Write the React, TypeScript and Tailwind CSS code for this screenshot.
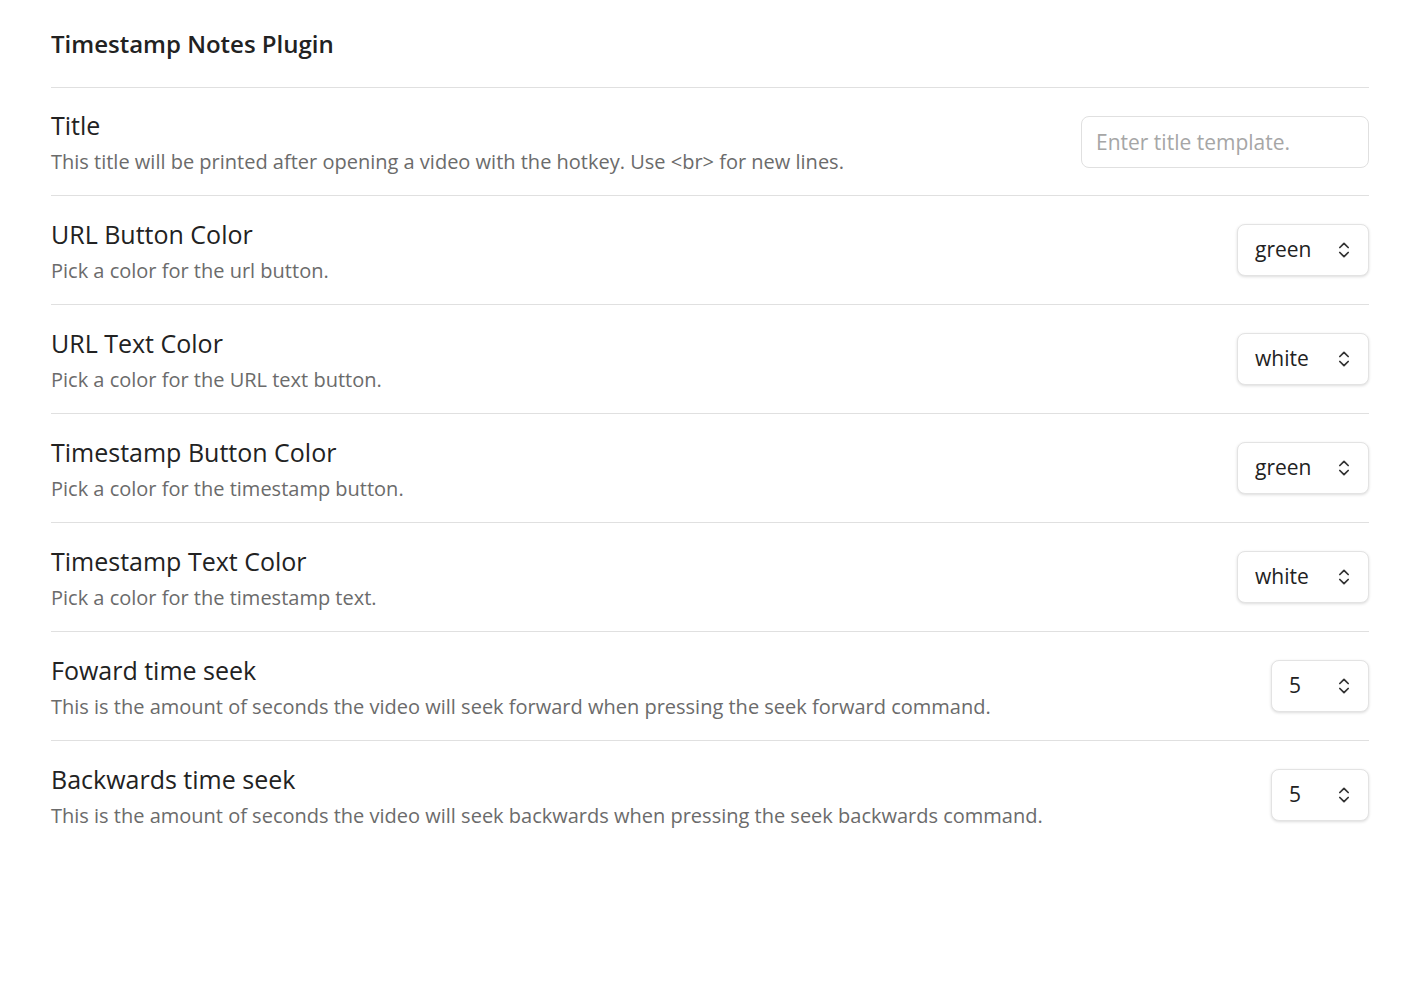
import { ChevronsUpDown } from 'lucide-react'

type Setting = {
  name: string
  desc: string
  kind: 'text' | 'select' | 'number'
  value?: string
  placeholder?: string
}

const SETTINGS: Setting[] = [
  { name: 'Title', desc: 'This title will be printed after opening a video with the hotkey. Use <br> for new lines.', kind: 'text', placeholder: 'Enter title template.' },
  { name: 'URL Button Color', desc: 'Pick a color for the url button.', kind: 'select', value: 'green' },
  { name: 'URL Text Color', desc: 'Pick a color for the URL text button.', kind: 'select', value: 'white' },
  { name: 'Timestamp Button Color', desc: 'Pick a color for the timestamp button.', kind: 'select', value: 'green' },
  { name: 'Timestamp Text Color', desc: 'Pick a color for the timestamp text.', kind: 'select', value: 'white' },
  { name: 'Foward time seek', desc: 'This is the amount of seconds the video will seek forward when pressing the seek forward command.', kind: 'number', value: '5' },
  { name: 'Backwards time seek', desc: 'This is the amount of seconds the video will seek backwards when pressing the seek backwards command.', kind: 'number', value: '5' },
]

function Dropdown({ value, wide }: { value: string; wide: boolean }) {
  return (
    <div className={`flex h-[52px] items-center justify-between rounded-lg border border-[#e3e3e3] bg-white pl-[17px] pr-[14px] shadow-[0_1px_3px_rgba(0,0,0,0.14)] ${wide ? 'w-[132px]' : 'w-[98px]'}`}>
      <span className="text-[21px] text-[#222]">{value}</span>
      <ChevronsUpDown className="h-[20px] w-[20px] text-[#333]" strokeWidth={2.1} />
    </div>
  )
}

export default function App() {
  return (
    <div className="min-h-[998px] bg-white px-[51px] font-['Open_Sans',sans-serif]">
      <h1 className="pb-[27px] pt-[28px] text-[24px] font-semibold leading-[32px] text-[#222]">Timestamp Notes Plugin</h1>
      <div className="border-t border-[#e0e0e0]">
        {SETTINGS.map((s, i) => (
          <div key={s.name} className={`flex items-center justify-between gap-6 ${i > 0 ? 'h-[109px] border-t border-[#e0e0e0]' : 'h-[107px]'}`}>
            <div className="flex flex-col pt-[1px]">
              <div className="text-[25px] leading-[40px] text-[#222]">{s.name}</div>
              <div className="text-[20px] leading-[34px] text-[#6b6b6b]">{s.desc}</div>
            </div>
            {s.kind === 'text' ? (
              <input
                className="h-[52px] w-[288px] rounded-lg border border-[#e0e0e0] px-[14px] text-[21px] text-[#222] outline-none placeholder:text-[#a6a6a6]"
                placeholder={s.placeholder}
              />
            ) : (
              <Dropdown value={s.value ?? ''} wide={s.kind === 'select'} />
            )}
          </div>
        ))}
      </div>
    </div>
  )
}
